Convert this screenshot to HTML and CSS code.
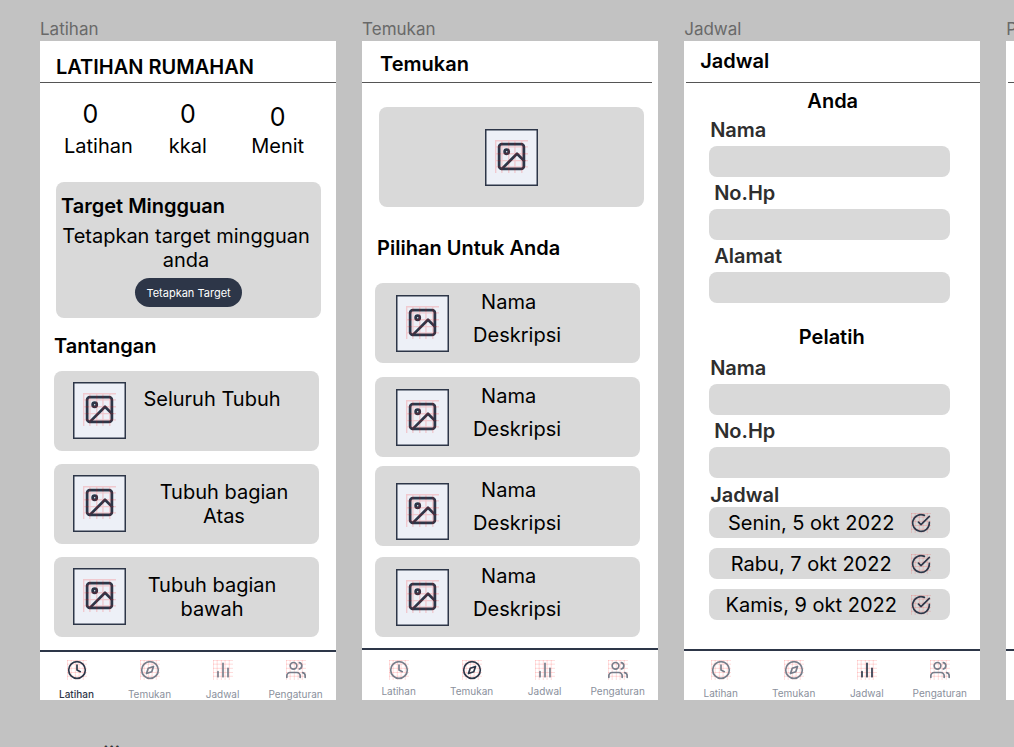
FILE: index.html
```html
<!DOCTYPE html>
<html lang="id">
<head>
<meta charset="utf-8">
<title>Latihan Rumahan</title>
<link rel="stylesheet" href="styles.css">
</head>
<body>
<svg class="sprite" aria-hidden="true">
  <symbol id="grid" viewBox="0 0 24 24">
    <path d="M0 .5H24M0 5H24M0 10H24M0 15H24M0 19.500H24M.5 0V24M5 0V24M10 0V24M14.500 0V24M19.500 0V24"/>
  </symbol>
  <symbol id="clock" viewBox="0 0 24 24"><circle cx="12" cy="12" r="10"/><path d="M12 6v6l4 2"/></symbol>
  <symbol id="compass" viewBox="0 0 24 24"><circle cx="12" cy="12" r="10"/><path d="M16.24 7.760l-2.120 6.360-6.360 2.120 2.120-6.360z"/></symbol>
  <symbol id="chart" viewBox="0 0 24 24"><path d="M18 20V10M12 20V4M6 20v-6"/></symbol>
  <symbol id="users" viewBox="0 0 24 24"><path d="M17 21v-2a4 4 0 0 0-4-4H5a4 4 0 0 0-4 4v2M23 21v-2a4 4 0 0 0-3-3.870M16 3.130a4 4 0 0 1 0 7.750"/><circle cx="9" cy="7" r="4"/></symbol>
  <symbol id="check" viewBox="0 0 24 24"><path d="M22 11.080V12a10 10 0 1 1-5.930-9.140M22 4L12 14.010l-3-3"/></symbol>
  <symbol id="thumb" viewBox="0 0 53 57">
    <rect x=".75" y=".75" width="51.500" height="55.500" fill="#edf0f7" stroke="#2d3648" stroke-width="1.500"/>
    <g transform="translate(10 11) scale(1.375)" fill="none">
      <g stroke="#2d3648" stroke-width="2" stroke-linecap="round" stroke-linejoin="round">
        <rect x="3" y="3" width="18" height="18" rx="2"/><circle cx="8.500" cy="8.500" r="1.500"/><path d="M21 15l-5-5L5 21"/>
      </g>
      <path stroke="#ff0000" stroke-opacity=".16" d="M0 .5H24M0 5H24M0 10H24M0 15H24M0 19.500H24M.5 0V24M5 0V24M10 0V24M14.500 0V24M19.500 0V24"/>
    </g>
  </symbol>
</svg>

<main class="board">
  <section class="artboard">
    <h2 class="artboard-name">Latihan</h2>
    <div class="screen">
      <header class="bar bar-home"><h1>LATIHAN RUMAHAN</h1></header>
      <div class="content">
        <dl class="stats">
          <div class="stat stat-first"><dd>0</dd><dt>Latihan</dt></div>
          <div class="stat"><dd>0</dd><dt>kkal</dt></div>
          <div class="stat stat-last"><dd>0</dd><dt>Menit</dt></div>
        </dl>
        <section class="target">
          <h3>Target Mingguan</h3>
          <p>Tetapkan target mingguan anda</p>
          <button class="pill" type="button">Tetapkan Target</button>
        </section>
        <h3 class="challenge-title">Tantangan</h3>
        <ul class="challenges">
          <li class="card"><svg class="thumb"><use href="#thumb"/></svg><p class="challenge">Seluruh Tubuh</p></li>
          <li class="card"><svg class="thumb"><use href="#thumb"/></svg><p class="challenge challenge-inset">Tubuh bagian Atas</p></li>
          <li class="card"><svg class="thumb"><use href="#thumb"/></svg><p class="challenge">Tubuh bagian bawah</p></li>
        </ul>
      </div>
      <nav class="tabs tabs-home">
        <a class="tab active" href="#"><svg class="icon"><use class="guide" href="#grid"/><use href="#clock"/></svg><span>Latihan</span></a>
        <a class="tab" href="#"><svg class="icon"><use class="guide" href="#grid"/><use href="#compass"/></svg><span>Temukan</span></a>
        <a class="tab" href="#"><svg class="icon"><use class="guide" href="#grid"/><use href="#chart"/></svg><span>Jadwal</span></a>
        <a class="tab" href="#"><svg class="icon"><use class="guide" href="#grid"/><use href="#users"/></svg><span>Pengaturan</span></a>
      </nav>
    </div>
    <p class="more">...</p>
  </section>

  <section class="artboard">
    <h2 class="artboard-name">Temukan</h2>
    <div class="screen">
      <header class="bar bar-discover"><h1>Temukan</h1></header>
      <div class="content">
        <div class="hero"><svg class="thumb"><use href="#thumb"/></svg></div>
        <h3 class="picks-title">Pilihan Untuk Anda</h3>
        <ul class="picks">
          <li class="card"><svg class="thumb"><use href="#thumb"/></svg><div class="pick"><p class="pick-name">Nama</p><p>Deskripsi</p></div></li>
          <li class="card"><svg class="thumb"><use href="#thumb"/></svg><div class="pick"><p class="pick-name">Nama</p><p>Deskripsi</p></div></li>
          <li class="card"><svg class="thumb"><use href="#thumb"/></svg><div class="pick"><p class="pick-name">Nama</p><p>Deskripsi</p></div></li>
          <li class="card"><svg class="thumb"><use href="#thumb"/></svg><div class="pick"><p class="pick-name">Nama</p><p>Deskripsi</p></div></li>
        </ul>
      </div>
      <nav class="tabs tabs-discover">
        <a class="tab" href="#"><svg class="icon"><use class="guide" href="#grid"/><use href="#clock"/></svg><span>Latihan</span></a>
        <a class="tab active" href="#"><svg class="icon"><use class="guide" href="#grid"/><use href="#compass"/></svg><span>Temukan</span></a>
        <a class="tab" href="#"><svg class="icon"><use class="guide" href="#grid"/><use href="#chart"/></svg><span>Jadwal</span></a>
        <a class="tab" href="#"><svg class="icon"><use class="guide" href="#grid"/><use href="#users"/></svg><span>Pengaturan</span></a>
      </nav>
    </div>
  </section>

  <section class="artboard">
    <h2 class="artboard-name">Jadwal</h2>
    <div class="screen">
      <header class="bar bar-schedule"><h1>Jadwal</h1></header>
      <form class="content schedule">
        <h3 class="group-title">Anda</h3>
        <div class="field"><label for="me-name">Nama</label><input id="me-name" type="text"></div>
        <div class="field field-inset"><label for="me-phone">No.Hp</label><input id="me-phone" type="tel"></div>
        <div class="field field-inset"><label for="me-address">Alamat</label><input id="me-address" type="text"></div>
        <h3 class="group-title group-coach">Pelatih</h3>
        <div class="field"><label for="coach-name">Nama</label><input id="coach-name" type="text"></div>
        <div class="field field-inset"><label for="coach-phone">No.Hp</label><input id="coach-phone" type="tel"></div>
        <h4 class="dates-title">Jadwal</h4>
        <ul class="dates">
          <li class="date"><span>Senin, 5 okt 2022</span><svg class="icon"><use class="guide" href="#grid"/><use href="#check"/></svg></li>
          <li class="date"><span>Rabu, 7 okt 2022</span><svg class="icon"><use class="guide" href="#grid"/><use href="#check"/></svg></li>
          <li class="date"><span>Kamis, 9 okt 2022</span><svg class="icon"><use class="guide" href="#grid"/><use href="#check"/></svg></li>
        </ul>
      </form>
      <nav class="tabs tabs-schedule">
        <a class="tab" href="#"><svg class="icon"><use class="guide" href="#grid"/><use href="#clock"/></svg><span>Latihan</span></a>
        <a class="tab" href="#"><svg class="icon"><use class="guide" href="#grid"/><use href="#compass"/></svg><span>Temukan</span></a>
        <a class="tab active" href="#"><svg class="icon"><use class="guide" href="#grid"/><use href="#chart"/></svg><span>Jadwal</span></a>
        <a class="tab" href="#"><svg class="icon"><use class="guide" href="#grid"/><use href="#users"/></svg><span>Pengaturan</span></a>
      </nav>
    </div>
  </section>

  <section class="artboard">
    <h2 class="artboard-name">Pengaturan</h2>
    <div class="screen">
      <header class="bar bar-schedule"></header>
      <div class="content"></div>
      <nav class="tabs tabs-schedule"></nav>
    </div>
  </section>
</main>
</body>
</html>
```
FILE: styles.css
```css
* { box-sizing: border-box; margin: 0; padding: 0; }
html, body { height: 100%; }
body {
  background: #c2c2c2;
  color: #000;
  font: 400 20px/24px Inter, "Liberation Sans", sans-serif;
  overflow: hidden;
}
ul { list-style: none; }
.sprite { position: absolute; width: 0; height: 0; }

/* Board */
.board {
  display: flex;
  align-items: flex-start;
  gap: 26px;
  min-height: 100%;
  padding: 17px 0 0 40px;
  overflow: hidden;
}
.artboard { flex: 0 0 30.4%; min-width: 0; }
.artboard-name { color: #696969; font-size: 17px; font-weight: 400; }
.screen {
  display: flex;
  flex-direction: column;
  min-height: 659px;
  background: #fff;
}
.content { flex: 1; }
.more { margin-top: 29px; padding-left: 63px; color: #333; font-weight: 400; }

/* Top bars */
.bar { height: 42px; border-bottom: 1px solid #555; }
.bar h1 { font-size: 20px; font-weight: 600; }
.bar-home { padding: 14px 16px 0; }
.bar-discover { margin-right: 6px; padding: 11px 18px 0; }
.bar-schedule { margin-left: 2px; padding: 8px 14px 0; }
h3 { font-size: 20px; font-weight: 600; }

/* Stats */
.stats {
  display: flex;
  gap: 36px;
  padding: 17px 32px 0 24px;
}
.stat { display: flex; flex-direction: column; gap: 6px; text-align: center; }
.stat dd { font-size: 25px; line-height: 28px; }
.stat-first dd { padding-right: 16px; }
.stat-last { margin-left: auto; padding-top: 3px; gap: 3px; }

/* Weekly target */
.target {
  margin: 24px 15px 0 16px;
  padding: 12px 5px 11px;
  border-radius: 8px;
  background: #d9d9d9;
  text-align: center;
}
.target h3 { text-align: left; }
.target p { padding: 6px 5px 6px 0; }
.pill {
  display: block;
  height: 29px;
  margin: 0 auto;
  padding: 0 11px;
  border: 0;
  border-radius: 15px;
  background: #2d3648;
  color: #fff;
  font: 400 11px/16px Inter, sans-serif;
}

/* Cards */
.card {
  display: flex;
  align-items: flex-start;
  height: 80px;
  padding: 11px 20px;
  border-radius: 8px;
  background: #d9d9d9;
}
.thumb { flex: none; width: 53px; height: 57px; }
.challenge-title { margin: 16px 14px 13px; }
.challenges { display: grid; gap: 13px; margin: 0 17px 0 14px; }
.challenges .card { padding: 11px 8px 11px 19px; }
.challenge { width: 154px; margin: 5px 0 0 9px; text-align: center; }
.challenge-inset { margin-left: 21px; }

.hero {
  display: grid;
  place-items: center;
  height: 100px;
  margin: 24px 14px 0 17px;
  border-radius: 8px;
  background: #d9d9d9;
}
.picks-title { margin: 29px 15px 23px; }
.picks { margin: 0 18px 0 13px; }
.picks .card { padding: 12px 21px; }
.picks .card:nth-child(2) { margin-top: 14px; }
.picks .card:nth-child(3) { margin-top: 9px; padding-top: 17px; }
.picks .card:nth-child(4) { margin-top: 11px; }
.pick { display: grid; gap: 9px; margin: -5px 0 0 24px; }
.pick-name { padding-left: 8px; }

/* Schedule form */
.schedule { padding: 6px 30px 0 25px; }
.group-title { margin-bottom: 5px; padding-left: 6px; text-align: center; }
.group-coach { margin: 22px 0 7px; padding-left: 4px; }
.field { display: grid; gap: 4px; margin-bottom: 4px; }
.field label, .dates-title {
  padding-left: 1px;
  color: #2e2e2e;
  font-size: 20px;
  font-weight: 600;
}
.field-inset label { padding-left: 5px; }
.field input {
  width: 100%;
  height: 31px;
  padding: 0 12px;
  border: 0;
  border-radius: 8px;
  background: #d9d9d9;
  font: inherit;
}
.dates-title { padding-top: 1px; }
.dates { display: grid; gap: 10px; }
.date {
  display: flex;
  align-items: center;
  height: 31px;
  padding: 0 19px 0 2px;
  border-radius: 8px;
  background: #d9d9d9;
}
.date span { flex: 1; text-align: center; }
.date .icon { color: #2d3648; }

/* Icons */
.icon {
  flex: none;
  width: 20px;
  height: 20px;
  fill: none;
  stroke: currentColor;
  stroke-width: 2;
  stroke-linecap: round;
  stroke-linejoin: round;
}
.guide { stroke: rgba(255, 0, 0, .17); stroke-width: 1; }

/* Bottom tabs */
.tabs {
  display: grid;
  grid-template-columns: repeat(4, 1fr);
  padding-right: 4px;
  border-top: 2px solid #2d3648;
}
.tabs-home { height: 50px; padding-top: 8px; }
.tabs-discover { height: 52px; padding-top: 10px; }
.tabs-schedule { height: 51px; padding-top: 9px; }
.tab {
  display: flex;
  flex-direction: column;
  align-items: center;
  gap: 7px;
  color: #8a909c;
  font-size: 10px;
  font-weight: 400;
  line-height: 12px;
  text-decoration: none;
}
.tab .icon { color: #777d8a; }
.tab.active .icon { color: #2d3648; }
.tabs-home .active { color: #2d3648; font-weight: 500; }
.tabs-home .tab { gap: 8px; }
.tabs-discover .tab { gap: 5px; }
```
